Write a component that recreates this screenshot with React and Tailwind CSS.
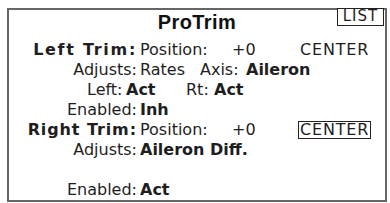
import React from 'react';

const font = { fontFamily: '"DejaVu Sans", "Liberation Sans", sans-serif' };

function Row({ label, track, children }) {
  return (
    <div className="flex h-5 leading-5 whitespace-nowrap">
      <div className={`w-[128px] shrink-0 text-right ${track || ''}`}>{label}</div>
      <div className="pl-[3px] flex">{children}</div>
    </div>
  );
}

function PositionRow({ label, track, boxed }) {
  return (
    <Row label={label} track={track}>
      <span className="w-[92px]">Position:</span>
      <span className="w-[66px]">+0</span>
      <span
        className={`h-[18px] leading-[15px] px-px mt-px border-[1.5px] tracking-[0.8px] ${boxed ? 'border-[#222]' : 'border-transparent'}`}
      >
        CENTER
      </span>
    </Row>
  );
}

export default function App() {
  return (
    <div className="relative w-[390px] h-[203px] bg-white pt-2 pl-[7px] pr-[3px] text-[#1e1e1e] text-[16px]" style={font}>
      <div className="h-[194px] border-2 border-[#666] overflow-hidden">
        <div
          className="h-6 leading-6 text-center text-[20px] font-bold tracking-[0.4px] text-[#111]"
          style={{ fontFamily: '"Liberation Sans", "DejaVu Sans", sans-serif' }}
        >
          ProTrim
        </div>
        <div className="mt-[6px]">
          <PositionRow label="Left Trim:" track="font-bold tracking-[1.7px]" />
          <Row label="Adjusts:">
            <span className="w-[60px]">Rates</span>
            <span className="w-[46px]">Axis:</span>
            <span className="font-semibold">Aileron</span>
          </Row>
          <div className="flex h-5 leading-5 whitespace-nowrap pl-[78px]">
            <span className="w-[39px]">Left:</span>
            <span className="w-[60px] font-semibold">Act</span>
            <span className="w-[28px]">Rt:</span>
            <span className="font-semibold">Act</span>
          </div>
          <Row label="Enabled:">
            <span className="font-semibold">Inh</span>
          </Row>
          <PositionRow label="Right Trim:" track="font-bold tracking-[0.9px]" boxed />
          <Row label="Adjusts:">
            <span className="font-semibold">Aileron Diff.</span>
          </Row>
          <div className="h-5" />
          <Row label="Enabled:">
            <span className="font-semibold">Act</span>
          </Row>
        </div>
      </div>
      <div className="absolute top-2 left-[337px] w-[47px] h-[18px] border-[1.5px] border-[#222] bg-white text-[15px] leading-[15px] text-center tracking-[1px]">
        LIST
      </div>
    </div>
  );
}
